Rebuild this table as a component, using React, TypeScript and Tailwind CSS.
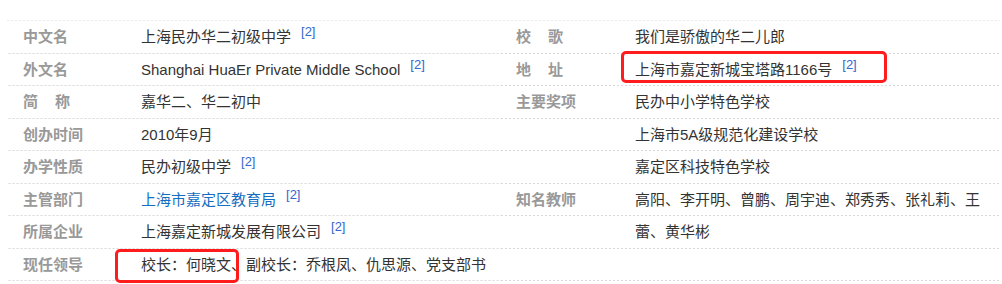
import React from "react";

const FONT = "font-['Liberation_Sans','Noto_Sans_CJK_SC',sans-serif]";
const ROW =
  "relative flex items-center h-[32.5px] bg-[linear-gradient(to_right,#d9d9d9_50%,transparent_50%)] bg-[length:4px_1px] bg-repeat-x bg-bottom";

function Sup() {
  return (
    <span className="relative -top-[6px] ml-[10px] text-[13px] leading-none text-[#3366cc]">
      [2]
    </span>
  );
}

function Label({ children, w }: { children?: React.ReactNode; w: string }) {
  return (
    <div className={`${w} shrink-0 font-bold text-[#999999] whitespace-nowrap`}>
      {children}
    </div>
  );
}

function Spaced({ a, b }: { a: string; b: string }) {
  return (
    <>
      <span>{a}</span>
      <span className="ml-[17px]">{b}</span>
    </>
  );
}

export default function App() {
  const left: { label: React.ReactNode; value: React.ReactNode; box?: boolean }[] = [
    { label: "中文名", value: <>上海民办华二初级中学<Sup /></> },
    { label: "外文名", value: <>Shanghai HuaEr Private Middle School<Sup /></> },
    { label: <Spaced a="简" b="称" />, value: "嘉华二、华二初中" },
    { label: "创办时间", value: "2010年9月" },
    { label: "办学性质", value: <>民办初级中学<Sup /></> },
    {
      label: "主管部门",
      value: (
        <>
          <span className="text-[#136ec2]">上海市嘉定区教育局</span>
          <Sup />
        </>
      ),
    },
    { label: "所属企业", value: <>上海嘉定新城发展有限公司<Sup /></> },
    { label: "现任领导", value: "校长：何晓文、副校长：乔根凤、仇思源、党支部书", box: true },
  ];

  const right: { label: React.ReactNode; value: React.ReactNode; box?: boolean }[] = [
    { label: <Spaced a="校" b="歌" />, value: "我们是骄傲的华二儿郎" },
    { label: <Spaced a="地" b="址" />, value: <>上海市嘉定新城宝塔路1166号<Sup /></>, box: true },
    { label: "主要奖项", value: "民办中小学特色学校" },
    { label: "", value: "上海市5A级规范化建设学校" },
    { label: "", value: "嘉定区科技特色学校" },
    { label: "知名教师", value: "高阳、李开明、曾鹏、周宇迪、郑秀秀、张礼莉、王" },
    { label: "", value: "蕾、黄华彬" },
    { label: "", value: "" },
  ];

  return (
    <div className={`w-[1002px] h-[284px] overflow-hidden bg-white ${FONT} text-[15px] text-[#333333]`}>
      <div className="pt-[20px] pl-[7px]">
        <div className="h-px w-[993px] bg-[linear-gradient(to_right,#ececec_50%,transparent_50%)] bg-[length:4px_1px] bg-repeat-x" />
        <div className="grid grid-cols-[495px_498px]">
          <div>
            {left.map((r, i) => (
              <div key={i} className={`${ROW} pl-[16px]`}>
                <Label w="w-[118px]">{r.label}</Label>
                <div className="whitespace-nowrap">{r.value}</div>
                {r.box && (
                  <div className="absolute left-[108px] top-0 w-[124px] h-[34px] border-[3px] border-[#ff1c1c] rounded-[5px]" />
                )}
              </div>
            ))}
          </div>
          <div>
            {right.map((r, i) => (
              <div key={i} className={`${ROW} pl-[14px]`}>
                <Label w="w-[119px]">{r.label}</Label>
                <div className="whitespace-nowrap">{r.value}</div>
                {r.box && (
                  <div className="absolute left-[119px] -top-[3px] w-[266px] h-[32px] border-[3px] border-[#ff1c1c] rounded-[5px]" />
                )}
              </div>
            ))}
          </div>
        </div>
      </div>
    </div>
  );
}
